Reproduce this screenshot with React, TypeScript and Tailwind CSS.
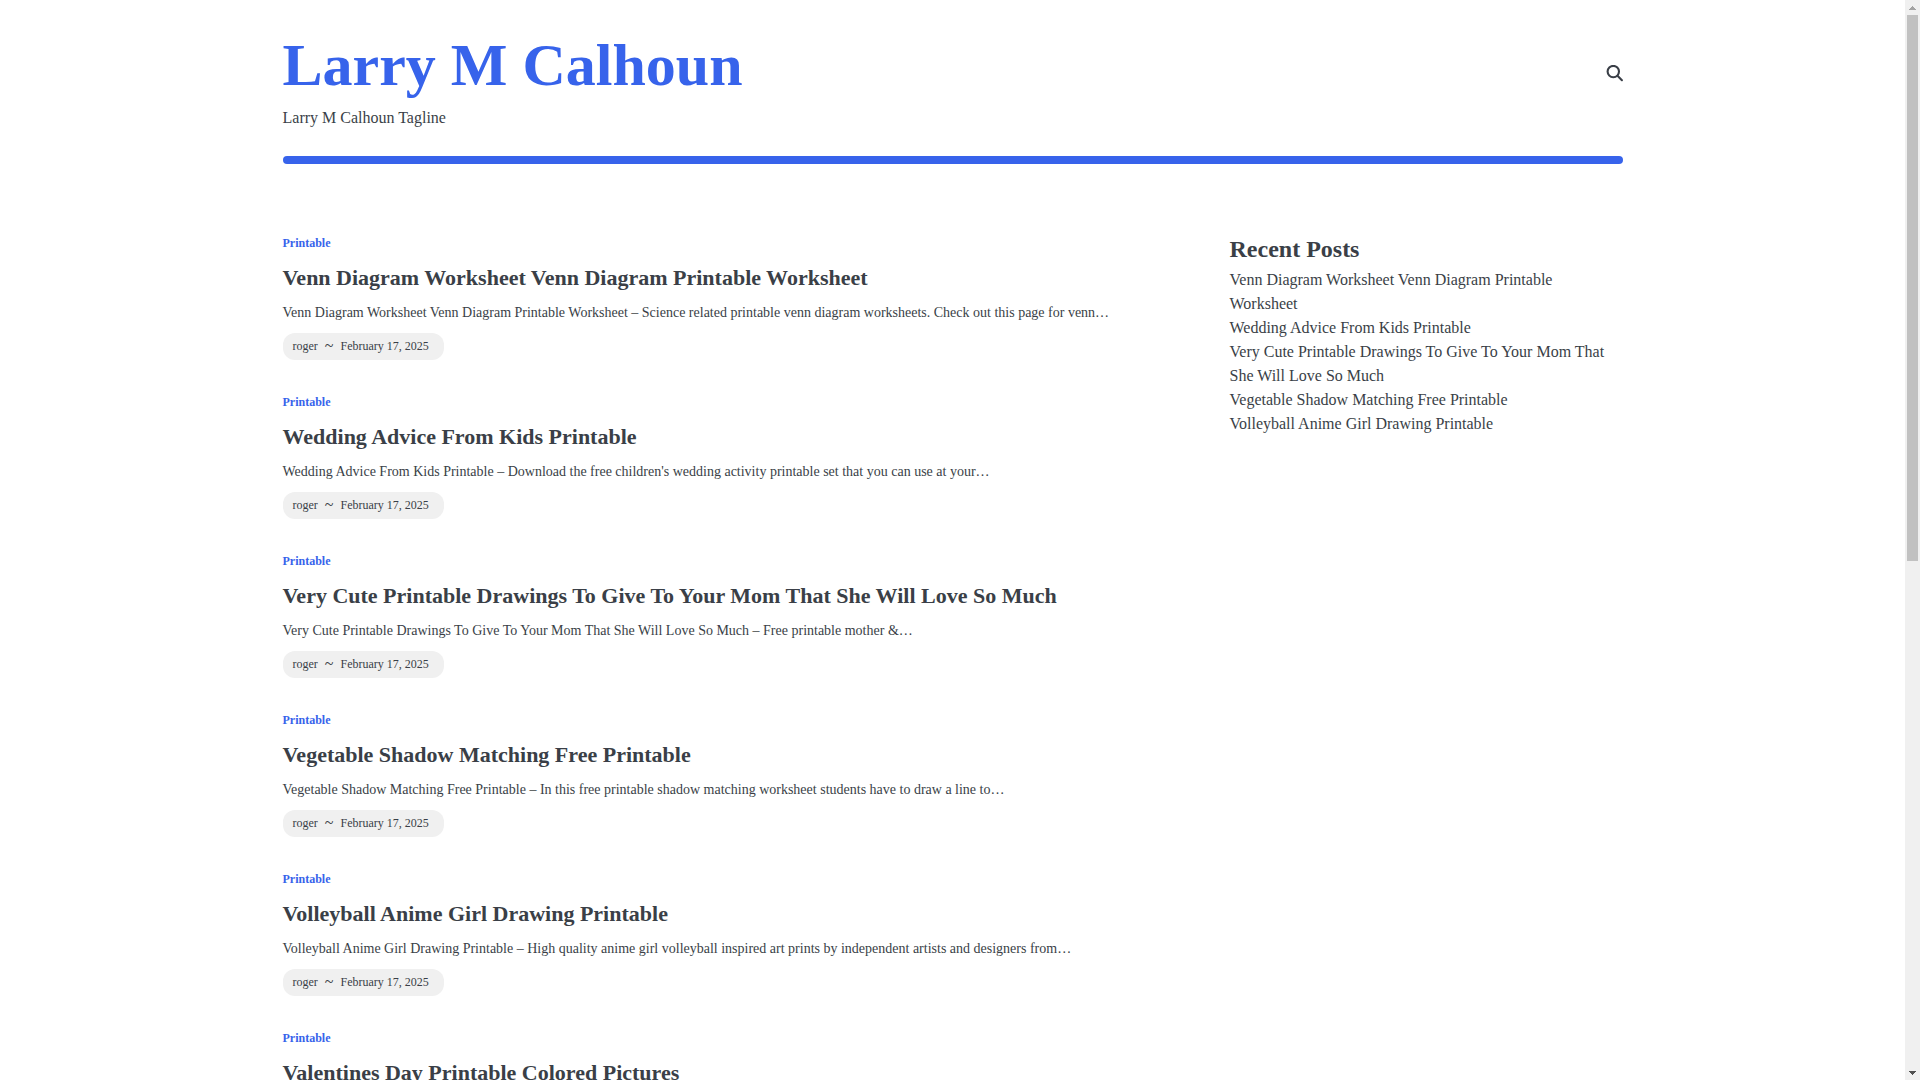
interface Post {
  title: string;
  excerpt: string;
}

const posts: Post[] = [
  {
    title: 'Venn Diagram Worksheet Venn Diagram Printable Worksheet',
    excerpt:
      'Venn Diagram Worksheet Venn Diagram Printable Worksheet – Science related printable venn diagram worksheets. Check out this page for venn…',
  },
  {
    title: 'Wedding Advice From Kids Printable',
    excerpt:
      "Wedding Advice From Kids Printable – Download the free children's wedding activity printable set that you can use at your…",
  },
  {
    title: 'Very Cute Printable Drawings To Give To Your Mom That She Will Love So Much',
    excerpt:
      'Very Cute Printable Drawings To Give To Your Mom That She Will Love So Much – Free printable mother &…',
  },
  {
    title: 'Vegetable Shadow Matching Free Printable',
    excerpt:
      'Vegetable Shadow Matching Free Printable – In this free printable shadow matching worksheet students have to draw a line to…',
  },
  {
    title: 'Volleyball Anime Girl Drawing Printable',
    excerpt:
      'Volleyball Anime Girl Drawing Printable – High quality anime girl volleyball inspired art prints by independent artists and designers from…',
  },
  {
    title: 'Valentines Day Printable Colored Pictures',
    excerpt: '',
  },
];

function SearchIcon() {
  return (
    <svg viewBox="0 0 17 17" className="size-[17px]" fill="none" stroke="currentColor" strokeWidth="2.1" strokeLinecap="round">
      <circle cx="7.3" cy="6.6" r="5.7" />
      <path d="M11.5 10.8 L15.9 15.2" />
    </svg>
  );
}

function PostItem({ post }: { post: Post }) {
  return (
    <article>
      <a href="#" className="block w-fit text-[12px] leading-5 font-bold text-[#3763eb]">Printable</a>
      <h2 className="mt-[6px] text-[22px] leading-[38px] font-bold">
        <a href="#">{post.title}</a>
      </h2>
      {post.excerpt && (
        <>
          <p className="mt-[3px] text-[14px] leading-[26px]">{post.excerpt}</p>
          <div className="mt-[7px] flex h-[27px] w-fit items-center gap-[7px] rounded-xl bg-[#f0f0f0] pr-[15px] pb-[2px] pl-[10px] text-[12px]">
            <a href="#">roger</a>
            <span className="text-base">~</span>
            <time>February 17, 2025</time>
          </div>
        </>
      )}
    </article>
  );
}

function Scrollbar() {
  return (
    <div className="flex w-[15px] shrink-0 flex-col bg-[#f0f0f0]" aria-hidden="true">
      <div className="flex h-[15px] items-center justify-center">
        <svg viewBox="0 0 7 4" className="h-1 w-[7px]" fill="#a3a3a3">
          <path d="M3 0h1v1h1v1h1v1h1v1H0V3h1V2h1V1h1z" />
        </svg>
      </div>
      <div className="flex-1 px-[2px]">
        <div className="h-[52%] bg-[#c1c1c1]" />
      </div>
      <div className="flex h-[15px] items-center justify-center">
        <svg viewBox="0 0 7 4" className="h-1 w-[7px]" fill="#505050">
          <path d="M0 0h7v1H6v1H5v1H4v1H3V3H2V2H1V1H0z" />
        </svg>
      </div>
    </div>
  );
}

export default function App() {
  return (
    <div className="flex h-screen bg-white font-['Liberation_Serif',serif] text-[#3a3f47]">
      <div className="flex-1 overflow-hidden">
        <div className="mx-auto max-w-[1340px]">
          <header className="pt-4">
            <div className="flex items-center justify-between">
              <div className="pt-[10px]">
                <h1 className="text-[60px] leading-[78px] font-bold text-[#3763eb]">
                  <a href="#">Larry M Calhoun</a>
                </h1>
                <p className="text-base leading-[27px]">Larry M Calhoun Tagline</p>
              </div>
              <button type="button" aria-label="Search">
                <SearchIcon />
              </button>
            </div>
            <div className="mt-[25px] h-2 rounded bg-[#3763eb]" />
          </header>

          <div className="grid grid-cols-[1fr_393px] gap-16 pt-[69px]">
            <main className="flex flex-col gap-8">
              {posts.map((post) => (
                <PostItem key={post.title} post={post} />
              ))}
            </main>

            <aside>
              <h2 className="text-[24px] leading-8 font-bold">Recent Posts</h2>
              <ul className="mt-[3px] text-base leading-6">
                {posts.slice(0, 5).map((post) => (
                  <li key={post.title}>
                    <a href="#">{post.title}</a>
                  </li>
                ))}
              </ul>
            </aside>
          </div>
        </div>
      </div>
      <Scrollbar />
    </div>
  );
}
